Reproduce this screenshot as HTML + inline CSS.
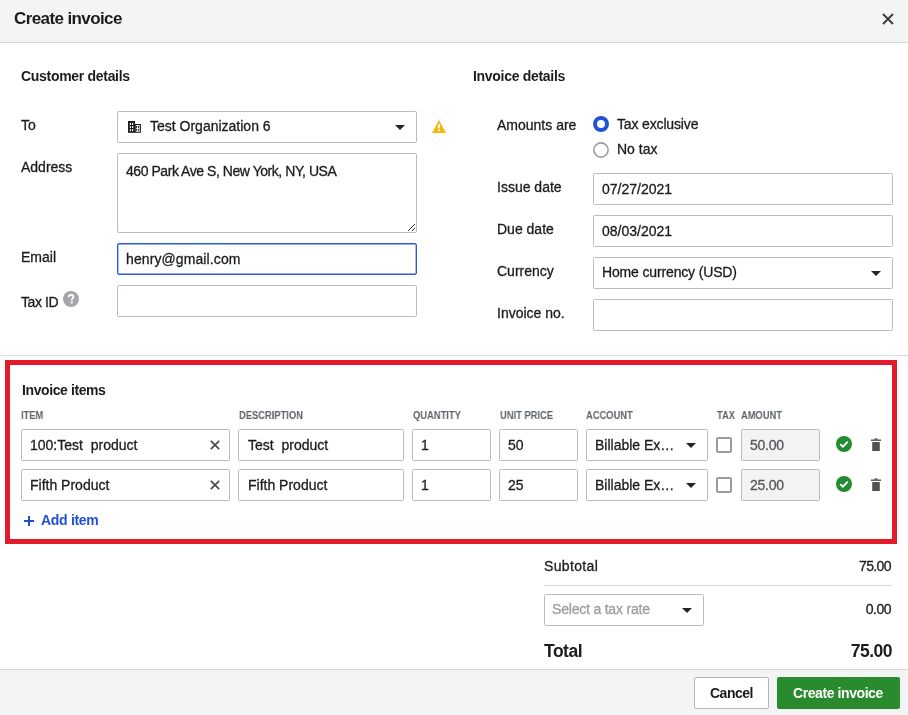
<!DOCTYPE html>
<html><head><meta charset="utf-8">
<style>
*{box-sizing:border-box;margin:0;padding:0}
html,body{width:908px;height:715px;overflow:hidden;background:#fff}
body{position:relative;-webkit-font-smoothing:antialiased;font-family:"Liberation Sans",sans-serif;color:#1a1c1e;font-size:14px}
.a{position:absolute}
.t{position:absolute;white-space:nowrap;line-height:1;will-change:transform;-webkit-text-stroke:0.3px currentColor}
.h2,.ch,[style*="font-weight:bold"]{-webkit-text-stroke:0}
.hdr{left:0;top:0;width:908px;height:43px;background:#f3f4f4;border-bottom:1px solid #d3d5d6}
.inp{position:absolute;border:1px solid #babcbe;border-radius:1.5px;background:#fff}
.lbl{font-size:14px}
.val{font-size:14px}
.h2{font-size:14px;font-weight:bold;letter-spacing:-0.3px}
.ch{font-size:11px;font-weight:bold;color:#5d6165;transform-origin:0 0;transform:scaleX(0.85)}
.caret{position:absolute;width:0;height:0;border-left:5px solid transparent;border-right:5px solid transparent;border-top:5px solid #222426}
.foot{left:0;top:669px;width:908px;height:46px;background:#f3f4f4;border-top:1px solid #d3d5d6}
.cb{position:absolute;width:16px;height:16px;border:2px solid #9a9c9e;border-radius:2px;background:#fff}
.amt{position:absolute;border:1px solid #babcbe;border-radius:1.5px;background:#f2f3f3}
</style></head><body>
<div class="a hdr"></div>
<div class="t" style="left:14px;top:10px;font-size:17px;font-weight:bold;letter-spacing:-0.6px">Create invoice</div>
<svg class="a" style="left:882px;top:13px" width="12" height="12" viewBox="0 0 12 12"><path d="M1 1L11 11M11 1L1 11" stroke="#3c3e40" stroke-width="2"/></svg>

<div class="t h2" style="left:21px;top:69px">Customer details</div>
<div class="t h2" style="left:473px;top:69px">Invoice details</div>

<!-- left labels -->
<div class="t lbl" style="left:21px;top:118px">To</div>
<div class="t lbl" style="left:21px;top:160px">Address</div>
<div class="t lbl" style="left:21px;top:250px">Email</div>
<div class="t lbl" style="left:21px;top:295px;letter-spacing:-0.4px">Tax ID</div>
<svg class="a" style="left:63px;top:291px" width="16" height="16" viewBox="0 0 16 16"><circle cx="8" cy="8" r="8" fill="#a4a6a9"/><path d="M5.6 6.2C5.6 4.8 6.6 4 8 4C9.4 4 10.4 4.8 10.4 6C10.4 7.4 8.7 7.6 8.7 9.2" stroke="#fff" stroke-width="1.8" fill="none"/><rect x="7.6" y="10.4" width="2.2" height="2" fill="#fff"/></svg>

<!-- left inputs -->
<div class="inp" style="left:117px;top:111px;width:300px;height:32px"></div>
<div class="inp" style="left:117px;top:153px;width:300px;height:80px"></div>
<div class="inp" style="left:117px;top:243px;width:300px;height:32px;border-color:#2d5cd6;box-shadow:inset 0 0 0 0.4px #2d5cd6;border-radius:2px"></div>
<div class="inp" style="left:117px;top:285px;width:300px;height:32px"></div>

<svg class="a" style="left:128px;top:121px" width="13" height="12" viewBox="0 0 13 12"><rect x="0" y="0" width="7" height="11.8" fill="#1e1e1e"/><g fill="#fff"><rect x="1.8" y="2" width="1.2" height="1.9"/><rect x="4" y="2" width="1.2" height="1.9"/><rect x="1.8" y="5.1" width="1.2" height="1.9"/><rect x="4" y="5.1" width="1.2" height="1.9"/><rect x="1.8" y="8.2" width="1.2" height="1.9"/><rect x="4" y="8.2" width="1.2" height="1.9"/></g><rect x="7.25" y="3.55" width="5.1" height="7.7" fill="#fff" stroke="#1e1e1e" stroke-width="1.1"/><g fill="#1e1e1e"><rect x="8" y="5" width="1.1" height="1.9"/><rect x="10.1" y="5" width="1.1" height="1.9"/><rect x="8" y="7.8" width="1.1" height="1.9"/><rect x="10.1" y="7.8" width="1.1" height="1.9"/></g></svg>
<div class="t val" style="left:150px;top:119px">Test Organization 6</div>
<div class="caret" style="left:395px;top:125px"></div>
<svg class="a" style="left:432px;top:120px" width="14" height="13" viewBox="0 0 14 13"><path d="M7 0L14 13H0Z" fill="#f6b70f"/><rect x="6.1" y="4" width="1.8" height="4.2" fill="#fff"/><rect x="6.1" y="9.3" width="1.8" height="1.8" fill="#fff"/></svg>

<div class="t val" style="left:126px;top:164px;letter-spacing:-0.45px">460 Park Ave S, New York, NY, USA</div>
<svg class="a" style="left:408px;top:223px" width="8" height="8" viewBox="0 0 8 8"><path d="M0.5 7.5L7 1M4.5 7.5L7 5" stroke="#aaa" stroke-width="0.6"/><g fill="#3a3a3a"><rect x="0" y="7" width="1" height="1"/><rect x="1" y="6" width="1" height="1"/><rect x="2" y="5" width="1" height="1"/><rect x="3" y="4" width="1" height="1"/><rect x="4" y="3" width="1" height="1"/><rect x="5" y="2" width="1" height="1"/><rect x="6" y="1" width="1" height="1"/><rect x="4" y="7" width="1" height="1"/><rect x="5" y="6" width="1" height="1"/><rect x="6" y="5" width="1" height="1"/></g></svg>
<div class="t val" style="left:126px;top:252px;letter-spacing:0.1px">henry@gmail.com</div>

<!-- right column -->
<div class="t lbl" style="left:497px;top:118px">Amounts are</div>
<svg class="a" style="left:593px;top:116px" width="16" height="16" viewBox="0 0 16 16"><circle cx="8" cy="8" r="6" fill="#fff" stroke="#2152d6" stroke-width="4"/></svg>
<div class="t lbl" style="left:617px;top:117px;letter-spacing:-0.15px">Tax exclusive</div>
<svg class="a" style="left:593px;top:142px" width="16" height="16" viewBox="0 0 16 16"><circle cx="8" cy="8" r="7.1" fill="#fff" stroke="#9a9c9e" stroke-width="1.6"/></svg>
<div class="t lbl" style="left:617px;top:142px">No tax</div>

<div class="t lbl" style="left:497px;top:180px">Issue date</div>
<div class="t lbl" style="left:497px;top:222px">Due date</div>
<div class="t lbl" style="left:497px;top:264px">Currency</div>
<div class="t lbl" style="left:497px;top:306px">Invoice no.</div>

<div class="inp" style="left:593px;top:173px;width:300px;height:32px"></div>
<div class="inp" style="left:593px;top:215px;width:300px;height:32px"></div>
<div class="inp" style="left:593px;top:257px;width:300px;height:32px"></div>
<div class="inp" style="left:593px;top:299px;width:300px;height:32px"></div>
<div class="t val" style="left:602px;top:182px">07/27/2021</div>
<div class="t val" style="left:602px;top:224px">08/03/2021</div>
<div class="t val" style="left:602px;top:265px;letter-spacing:-0.15px">Home currency (USD)</div>
<div class="caret" style="left:871px;top:271px"></div>

<div class="a" style="left:0;top:355px;width:908px;height:1px;background:#dcdedf"></div>
<div class="a" style="left:5px;top:360px;width:892px;height:184px;border:5px solid #e31c2b"></div>

<div class="t h2" style="left:21.5px;top:383px;letter-spacing:-0.4px">Invoice items</div>


<!-- column headers -->
<div class="t ch" style="left:21px;top:410px">ITEM</div>
<div class="t ch" style="left:239px;top:410px">DESCRIPTION</div>
<div class="t ch" style="left:413px;top:410px">QUANTITY</div>
<div class="t ch" style="left:500px;top:410px">UNIT PRICE</div>
<div class="t ch" style="left:586px;top:410px">ACCOUNT</div>
<div class="t ch" style="left:717px;top:410px">TAX</div>
<div class="t ch" style="left:741px;top:410px">AMOUNT</div>

<div class="inp" style="left:21px;top:429px;width:209px;height:32px"></div>
<div class="inp" style="left:238px;top:429px;width:166px;height:32px"></div>
<div class="inp" style="left:412px;top:429px;width:79px;height:32px"></div>
<div class="inp" style="left:499px;top:429px;width:79px;height:32px"></div>
<div class="inp" style="left:586px;top:429px;width:122px;height:32px"></div>
<div class="cb" style="left:716px;top:437px"></div>
<div class="amt" style="left:741px;top:429px;width:79px;height:32px"></div>
<div class="t val" style="left:30px;top:438px">100:Test&nbsp; product</div>
<svg class="a" style="left:210px;top:440px" width="10" height="10" viewBox="0 0 10 10"><path d="M0.8 0.8L9.2 9.2M9.2 0.8L0.8 9.2" stroke="#4a4c4e" stroke-width="1.7"/></svg>
<div class="t val" style="left:248px;top:438px">Test&nbsp; product</div>
<div class="t val" style="left:421px;top:438px">1</div>
<div class="t val" style="left:508px;top:438px">50</div>
<div class="t val" style="left:595px;top:438px">Billable Ex…</div>
<div class="caret" style="left:686px;top:443px"></div>
<div class="t val" style="left:749.5px;top:438px;color:#55595c;letter-spacing:-0.25px">50.00</div>
<svg class="a" style="left:836px;top:436px" width="16" height="16" viewBox="0 0 16 16"><circle cx="8" cy="8" r="8" fill="#238b32"/><path d="M4.2 8.2L6.9 10.6L11.8 5.6" stroke="#fff" stroke-width="1.9" fill="none"/></svg>
<svg class="a" style="left:871px;top:438px" width="10" height="14" viewBox="0 0 10 14"><rect x="0" y="1.5" width="10" height="1.4" fill="#505254"/><rect x="3.5" y="0.4" width="3" height="1.4" fill="#505254"/><rect x="1.2" y="4" width="7.6" height="9" rx="0.5" fill="#505254"/></svg>

<div class="inp" style="left:21px;top:469px;width:209px;height:32px"></div>
<div class="inp" style="left:238px;top:469px;width:166px;height:32px"></div>
<div class="inp" style="left:412px;top:469px;width:79px;height:32px"></div>
<div class="inp" style="left:499px;top:469px;width:79px;height:32px"></div>
<div class="inp" style="left:586px;top:469px;width:122px;height:32px"></div>
<div class="cb" style="left:716px;top:477px"></div>
<div class="amt" style="left:741px;top:469px;width:79px;height:32px"></div>
<div class="t val" style="left:30px;top:478px">Fifth Product</div>
<svg class="a" style="left:210px;top:480px" width="10" height="10" viewBox="0 0 10 10"><path d="M0.8 0.8L9.2 9.2M9.2 0.8L0.8 9.2" stroke="#4a4c4e" stroke-width="1.7"/></svg>
<div class="t val" style="left:248px;top:478px">Fifth Product</div>
<div class="t val" style="left:421px;top:478px">1</div>
<div class="t val" style="left:508px;top:478px">25</div>
<div class="t val" style="left:595px;top:478px">Billable Ex…</div>
<div class="caret" style="left:686px;top:483px"></div>
<div class="t val" style="left:749.5px;top:478px;color:#55595c;letter-spacing:-0.25px">25.00</div>
<svg class="a" style="left:836px;top:476px" width="16" height="16" viewBox="0 0 16 16"><circle cx="8" cy="8" r="8" fill="#238b32"/><path d="M4.2 8.2L6.9 10.6L11.8 5.6" stroke="#fff" stroke-width="1.9" fill="none"/></svg>
<svg class="a" style="left:871px;top:478px" width="10" height="14" viewBox="0 0 10 14"><rect x="0" y="1.5" width="10" height="1.4" fill="#505254"/><rect x="3.5" y="0.4" width="3" height="1.4" fill="#505254"/><rect x="1.2" y="4" width="7.6" height="9" rx="0.5" fill="#505254"/></svg>

<svg class="a" style="left:24px;top:516px" width="10" height="10" viewBox="0 0 10 10"><path d="M5 0V10M0 5H10" stroke="#1f50d4" stroke-width="2"/></svg>
<div class="t h2" style="left:41px;top:513px;color:#1f50d4">Add item</div>

<!-- totals -->
<div class="t val" style="left:543.5px;top:559px;letter-spacing:0.35px">Subtotal</div>
<div class="t val" style="left:891px;top:559px;letter-spacing:-0.6px;transform:translateX(-100%)">75.00</div>
<div class="a" style="left:544px;top:585px;width:348px;height:1px;background:#d6d8d9"></div>
<div class="inp" style="left:544px;top:594px;width:160px;height:32px"></div>
<div class="t val" style="left:552px;top:602px;color:#9c9ea0;letter-spacing:-0.2px">Select a tax rate</div>
<div class="caret" style="left:682px;top:608px"></div>
<div class="t val" style="left:891px;top:602px;letter-spacing:-0.5px;transform:translateX(-100%)">0.00</div>
<div class="t" style="left:544px;top:643px;font-size:17.5px;font-weight:bold;letter-spacing:-0.5px">Total</div>
<div class="t" style="left:892px;top:643px;font-size:17.5px;font-weight:bold;letter-spacing:-0.5px;transform:translateX(-100%)">75.00</div>
<div class="foot a"></div>
<div class="a" style="left:694px;top:677px;width:75px;height:32px;background:#fff;border:1px solid #b4b6b8;border-radius:2px"></div>
<div class="t" style="left:710px;top:686px;font-size:14px;font-weight:bold;letter-spacing:-0.5px">Cancel</div>
<div class="a" style="left:777px;top:677px;width:123px;height:32px;background:#2a8a2e;border-radius:2px"></div>
<div class="t" style="left:793px;top:686px;font-size:14px;font-weight:bold;letter-spacing:-0.42px;color:#fff">Create invoice</div>
</body></html>
